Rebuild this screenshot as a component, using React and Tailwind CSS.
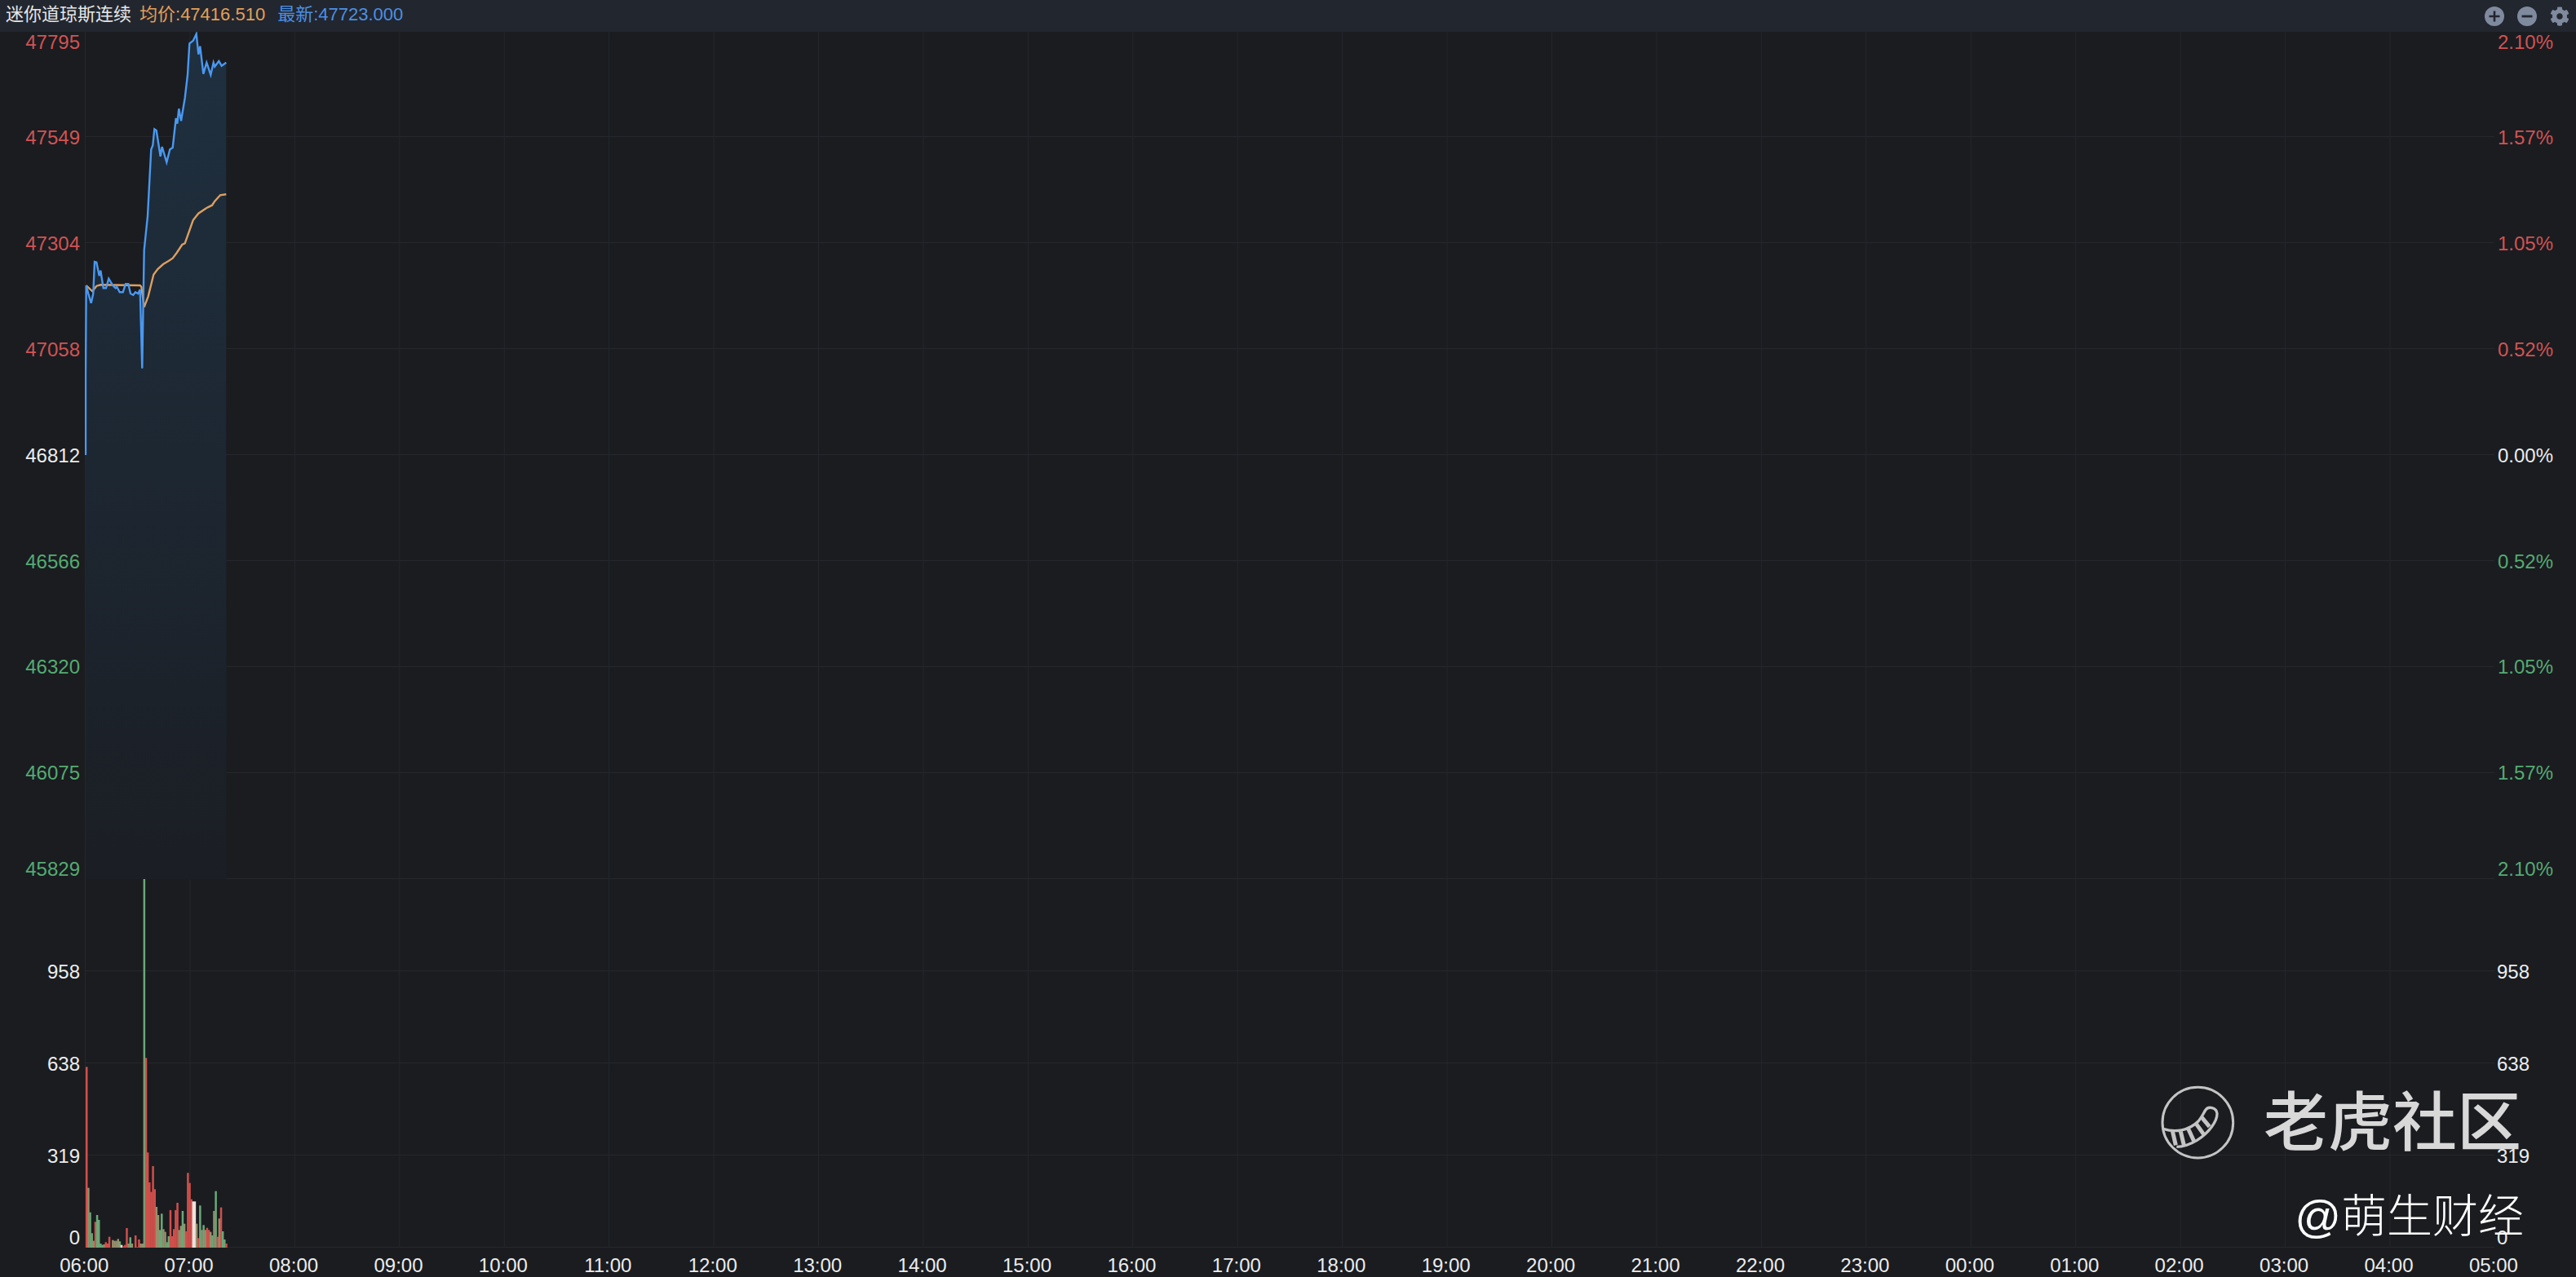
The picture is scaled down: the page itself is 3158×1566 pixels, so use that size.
import { FaCog } from 'react-icons/fa';

const FONT = 'font-["Liberation_Sans","Noto_Sans_CJK_SC",sans-serif]';

// readings of the curve, in zoomed crop pixels (crop origin 80,20 at 3x)
const toSvg = (pts) => pts.map(([x, y]) => `${(80 + x / 3).toFixed(1)},${(20 + y / 3).toFixed(1)}`).join(' ');

const BLUE = [
  [75, 1614], [75, 1320], [77, 990], [85, 1020], [95, 1055], [103, 1020], [108, 903], [115, 905], [125, 955], [130, 935],
  [140, 1000], [150, 1000], [160, 965], [175, 990], [185, 1000], [190, 995], [200, 1015], [212, 1015], [222, 985],
  [232, 985], [240, 1020], [250, 1025], [258, 1015], [268, 1020], [275, 1005], [283, 1295], [290, 860], [303, 735],
  [316, 490], [322, 475], [328, 415], [335, 420], [350, 515], [356, 480], [373, 537], [385, 490], [395, 483], [407, 375],
  [412, 395], [418, 340], [426, 385], [440, 300], [450, 215], [457, 100], [470, 90], [482, 65], [490, 140], [496, 110],
  [508, 212], [520, 170], [535, 215], [545, 170], [550, 185], [565, 165], [575, 182], [592, 170],
];

const ORANGE = [
  [77, 990], [100, 1012], [115, 992], [130, 988], [275, 990], [280, 995], [290, 1070], [305, 1030], [325, 950], [340, 930],
  [360, 912], [380, 900], [395, 890], [410, 870], [430, 840], [440, 835], [470, 750], [490, 725], [520, 705], [540, 695],
  [550, 680], [570, 658], [592, 655],
];

const R = '#d14f4b';
const G = '#6aa878';
const O = '#978f6c';
const W = '#efe2dc';

// one bar per minute: top in zoomed crop pixels (origin 90,1260 at 3x), colour
const BARS = [
  [145, R], [590, O], [680, G], [757, G], [785, O], [715, R], [690, G], [708, G], [795, G], [800, G], [798, O], [790, R],
  [795, R], [770, R], [810, O], [782, O], [785, O], [785, O], [778, O], [787, G], [800, W], [805, R], [800, R], [738, R],
  [795, O], [772, G], [795, O], [810, O], [765, R], [808, R], [780, R], [795, O], [795, O], [-546, G], [112, R], [460, R],
  [570, R], [605, R], [510, R], [595, R], [660, O], [690, O], [745, G], [685, G], [742, O], [752, O], [790, G], [768, G],
  [672, R], [768, R], [742, R], [672, R], [645, R], [745, O], [730, O], [675, G], [722, O], [750, R], [535, R], [572, R],
  [632, R], [640, W], [640, W], [722, O], [775, R], [655, G], [745, O], [727, G], [745, O], [737, R], [745, R], [752, O],
  [765, G], [675, O], [602, G], [770, R], [703, O], [662, R], [750, G], [780, G], [795, R],
];

const TIMES = [
  '06:00', '07:00', '08:00', '09:00', '10:00', '11:00', '12:00', '13:00', '14:00', '15:00', '16:00', '17:00',
  '18:00', '19:00', '20:00', '21:00', '22:00', '23:00', '00:00', '01:00', '02:00', '03:00', '04:00', '05:00',
];

const PRICE_ROWS = [
  { left: '47795', right: '2.10%', color: 'text-[#d05353]', h: 'h-[64px] items-start' },
  { left: '47549', right: '1.57%', color: 'text-[#d05353]', h: 'h-[130px] items-center' },
  { left: '47304', right: '1.05%', color: 'text-[#d05353]', h: 'h-[130px] items-center' },
  { left: '47058', right: '0.52%', color: 'text-[#d05353]', h: 'h-[130px] items-center' },
  { left: '46812', right: '0.00%', color: 'text-[#ececec]', h: 'h-[130px] items-center' },
  { left: '46566', right: '0.52%', color: 'text-[#55aa72]', h: 'h-[130px] items-center' },
  { left: '46320', right: '1.05%', color: 'text-[#55aa72]', h: 'h-[130px] items-center' },
  { left: '46075', right: '1.57%', color: 'text-[#55aa72]', h: 'h-[130px] items-center' },
  { left: '45829', right: '2.10%', color: 'text-[#55aa72]', h: 'h-[65px] items-end' },
];

const VOLUME_ROWS = [
  { label: '', h: 'h-[57px] items-center' },
  { label: '958', h: 'h-[113px] items-center' },
  { label: '638', h: 'h-[113px] items-center' },
  { label: '319', h: 'h-[113px] items-center' },
  { label: '0', h: 'h-[56px] items-end' },
];

function Chart() {
  const priceLines = [168, 298, 428, 558, 688, 818, 948, 1078, 1191, 1304, 1417, 1530];
  const timeLines = TIMES.map((_, i) => 104.5 + i * 128.43);
  return (
    <svg viewBox="104 39 2954 1491" className="flex-1 h-full block">
      <defs>
        <linearGradient id="area" x1="0" y1="0" x2="0" y2="1">
          <stop offset="0" stopColor="#1f3040" />
          <stop offset="1" stopColor="#1b1e24" />
        </linearGradient>
      </defs>
      {priceLines.map((y) => (
        <line key={y} x1="104" x2="3058" y1={y - 0.5} y2={y - 0.5} stroke="#25272c" strokeWidth="1" />
      ))}
      {timeLines.map((x) => (
        <line key={x} x1={x} x2={x} y1="39" y2="1530" stroke="#25272c" strokeWidth="1" />
      ))}
      <polygon points={`${toSvg(BLUE)} 277.3,1078 105,1078`} fill="url(#area)" />
      {BARS.map(([top, color], i) => {
        const y = 1260 + top / 3;
        return <rect key={i} x={105 + i * 2.14} y={y} width="2.5" height={1531 - y} fill={color} />;
      })}
      <polyline points={toSvg(ORANGE)} fill="none" stroke="#dd9f5f" strokeWidth="2.4" />
      <polyline points={toSvg(BLUE)} fill="none" stroke="#4a98f0" strokeWidth="2.4" />
    </svg>
  );
}

function Watermark() {
  return (
    <div className="absolute left-[2648px] top-[1325px] w-[460px]">
      <div className="flex items-center">
        <svg viewBox="0 0 330 315" className="w-[110px] h-[105px] -ml-[8px]" fill="none" stroke="#c4c4c4">
          <circle cx="163" cy="155" r="130" strokeWidth="9" />
          <path
            d="M36 178 C80 192 130 185 165 150 C178 135 184 120 192 108 C202 94 232 98 234 122 C234 150 205 192 160 220 C130 238 105 244 85 244"
            strokeWidth="10"
          />
          <path
            d="M70 186 L82 238 M100 188 L112 238 M128 178 L150 226 M156 158 L186 200 M176 134 L206 170"
            strokeWidth="15"
          />
        </svg>
        <span className="ml-[25px] text-[79px] leading-[90px] font-medium text-[#d8d8d8] whitespace-nowrap">老虎社区</span>
      </div>
      <div className="mt-[26px] text-right pr-[14px] text-[56px] leading-[72px] font-light text-white whitespace-nowrap">@萌生财经</div>
    </div>
  );
}

export default function App() {
  return (
    <div className={`relative w-[3158px] h-[1566px] overflow-hidden flex flex-col bg-[#1a1c20] ${FONT}`}>
      {/* Header */}
      <div className="h-[39px] flex items-center bg-[#22262f] pl-[7px] pr-[8px] pb-[4px] text-[22px] leading-[28px]">
        <span className="text-[#e6e6e6]">迷你道琼斯连续</span>
        <span className="ml-[10px] text-[#e3a058]">均价:47416.510</span>
        <span className="ml-[15px] text-[#4a90e2]">最新:47723.000</span>
        <div className="ml-auto flex items-center gap-[16px] pt-[4px]">
          <svg viewBox="0 0 24 24" className="w-[24px] h-[24px]">
            <circle cx="12" cy="12" r="12" fill="#7f8a9e" />
            <path d="M12 5.5v13M5.5 12h13" stroke="#22262f" strokeWidth="2.6" />
          </svg>
          <svg viewBox="0 0 24 24" className="w-[24px] h-[24px]">
            <circle cx="12" cy="12" r="12" fill="#7f8a9e" />
            <path d="M5.5 12h13" stroke="#22262f" strokeWidth="2.8" />
          </svg>
          <FaCog className="w-[24px] h-[24px] text-[#7f8a9e]" />
        </div>
      </div>

      {/* Chart body */}
      <div className="h-[1491px] flex text-[24px] leading-[24px]">
        <div className="w-[104px] mt-[1px] flex flex-col">
          {PRICE_ROWS.map((r) => (
            <div key={r.left} className={`flex justify-end pr-[6px] ${r.h} ${r.color}`}>{r.left}</div>
          ))}
          {VOLUME_ROWS.map((r) => (
            <div key={r.label} className={`flex justify-end pr-[6px] text-[#ececec] ${r.h}`}>{r.label}</div>
          ))}
        </div>
        <Chart />
        <div className="w-[100px] mt-[1px] flex flex-col">
          {PRICE_ROWS.map((r) => (
            <div key={r.left} className={`flex justify-end pr-[28px] ${r.h} ${r.color}`}>{r.right}</div>
          ))}
          {VOLUME_ROWS.map((r) => (
            <div key={r.label} className={`flex pl-[3px] text-[#ececec] ${r.h}`}>{r.label}</div>
          ))}
        </div>
      </div>

      {/* Time axis */}
      <div className="flex pl-[39px] pt-[10px] text-[24px] leading-[24px] text-[#ececec]">
        {TIMES.map((t) => (
          <span key={t} className="w-[128.43px] shrink-0 text-center">{t}</span>
        ))}
      </div>

      <Watermark />
    </div>
  );
}
